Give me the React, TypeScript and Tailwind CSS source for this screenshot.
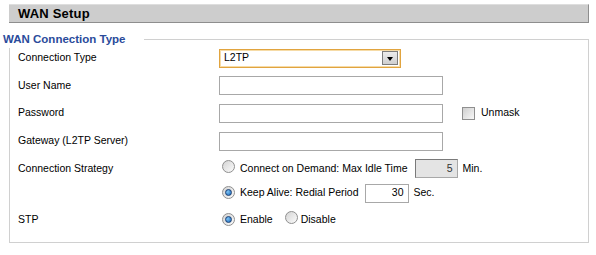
import type { ReactNode } from 'react'

function Radio({ checked }: { checked?: boolean }) {
  return (
    <span className="relative inline-flex w-[13px] h-[13px] shrink-0 items-center justify-center rounded-full border border-[#8f8f8f] bg-[linear-gradient(135deg,#d4d4d4,#fbfbfb)]">
      {checked && (
        <span className="w-[7px] h-[7px] rounded-full border border-[#1b3f73] bg-[radial-gradient(circle_at_35%_35%,#7fc4f5,#1565b8)]" />
      )}
    </span>
  )
}

function TextBox({ w = 'w-[224px]' }: { w?: string }) {
  return <div className={`${w} h-[19px] border border-[#a8a8a8] bg-white`} />
}

function Row({ h, label, children }: { h: string; label?: string; children: ReactNode }) {
  return (
    <div className={`flex items-center ${h}`}>
      <div className="w-[201px] shrink-0">{label}</div>
      <div className="flex items-center">{children}</div>
    </div>
  )
}

export default function App() {
  return (
    <div className="w-[596px] h-[255px] bg-white pt-[4px] pl-[9px] text-[10.5px] text-black font-['Liberation_Sans',Arial,sans-serif]">
      <div className="w-[580px] h-[19px] flex items-center pl-[9px] bg-[#cdcdcd] border-t border-t-[#dedede] border-b border-r border-[#8e8e8e]">
        <span className="text-[13px] font-bold tracking-[0.2px]">WAN Setup</span>
      </div>

      <div className="relative mt-[16px] w-[580px] h-[204px] border border-[#d0d0d0] pt-[4px] pl-[8px]">
        <div className="absolute left-[-7px] top-[-8px] w-[141px] h-[16px] bg-white flex items-center">
          <span className="text-[11.5px] font-bold text-[#2a4b9b]">WAN Connection Type</span>
        </div>

        <Row h="h-[28px]" label="Connection Type">
          <div className="flex items-center w-[182px] h-[19px] border border-[#e1a43f] shadow-[inset_0_0_0_1px_#f6dba6] bg-white pl-[4px] pr-[2px] justify-between">
            <span>L2TP</span>
            <span className="flex items-center justify-center w-[16px] h-[14px] border border-[#7d7d7d] bg-[linear-gradient(#ececec,#cfcfcf)]">
              <span className="w-0 h-0 border-l-[3.5px] border-r-[3.5px] border-t-[4px] border-l-transparent border-r-transparent border-t-black mt-[2px]" />
            </span>
          </div>
        </Row>
        <Row h="h-[27px]" label="User Name">
          <TextBox />
        </Row>
        <Row h="h-[28px]" label="Password">
          <TextBox />
          <span className="ml-[19px] w-[13px] h-[13px] border border-[#8f8f8f] bg-[linear-gradient(135deg,#cfcfcf,#f8f8f8)]" />
          <span className="ml-[6px]">Unmask</span>
        </Row>
        <Row h="h-[28px]" label="Gateway (L2TP Server)">
          <TextBox />
        </Row>
        <Row h="h-[27px]" label="Connection Strategy">
          <span className="ml-[3px]"><Radio /></span>
          <span className="ml-[5px]">Connect on Demand: Max Idle Time</span>
          <div className="ml-[7px] w-[43px] h-[19px] border border-[#a8a8a8] border-l-[#7a7a7a] border-t-[#7a7a7a] bg-[#e4e4e4] flex items-center justify-end pr-[4px] text-[#333]">5</div>
          <span className="ml-[5px]">Min.</span>
        </Row>
        <Row h="h-[22px]">
          <span className="ml-[3px]"><Radio checked /></span>
          <span className="ml-[5px]">Keep Alive: Redial Period</span>
          <div className="ml-[6px] w-[44px] h-[19px] border border-[#a8a8a8] bg-white flex items-center justify-end pr-[4px]">30</div>
          <span className="ml-[5px]">Sec.</span>
        </Row>
        <Row h="h-[32px]" label="STP">
          <span className="ml-[3px]"><Radio checked /></span>
          <span className="ml-[5px]">Enable</span>
          <span className="ml-[12px]"><Radio /></span>
          <span className="ml-[3px]">Disable</span>
        </Row>
      </div>
    </div>
  )
}
